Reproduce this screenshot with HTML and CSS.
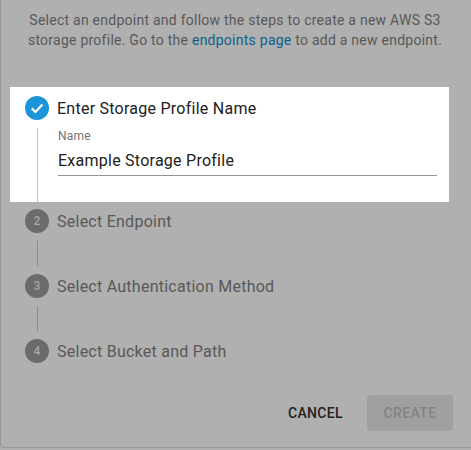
FILE: index.html
```html
<!DOCTYPE html>
<html lang="en">
<head>
  <meta charset="UTF-8">
  <title>Create Storage Profile</title>
  <link rel="stylesheet" href="styles.css">
</head>
<body>
  <div class="dialogo">
    <p class="intro">Select an endpoint and follow the steps to create a new AWS S3 storage profile. Go to the <a href="#">endpoints page</a> to add a new endpoint.</p>

    <div class="pasos">
      <div class="paso activo">
        <div class="paso-titulo">
          <span class="icono completo">
            <svg viewBox="0 0 24 24" width="24" height="24"><path d="M6.8 12.4l3.6 3.6 7-7.4" fill="none" stroke="#fff" stroke-width="2.2"/></svg>
          </span>
          <span class="paso-texto">Enter Storage Profile Name</span>
        </div>
        <div class="paso-contenido">
          <label class="campo">
            <span class="campo-label">Name</span>
            <input type="text" value="Example Storage Profile" readonly>
          </label>
        </div>
      </div>

      <div class="paso">
        <div class="paso-titulo"><span class="icono">2</span><span class="paso-texto">Select Endpoint</span></div>
        <div class="conector"></div>
      </div>
      <div class="paso">
        <div class="paso-titulo"><span class="icono">3</span><span class="paso-texto">Select Authentication Method</span></div>
        <div class="conector"></div>
      </div>
      <div class="paso">
        <div class="paso-titulo"><span class="icono">4</span><span class="paso-texto">Select Bucket and Path</span></div>
      </div>
    </div>

    <div class="acciones">
      <button class="cancelar">CANCEL</button>
      <button class="crear" disabled>CREATE</button>
    </div>
  </div>
</body>
</html>
```

FILE: styles.css
```css
* {
  box-sizing: border-box;
}

body {
  margin: 0;
  height: 450px;
  overflow: hidden;
  background-color: #b0b0b0;
  font-family: 'Roboto', sans-serif;
  letter-spacing: 0.25px;
}

.dialogo {
  height: 448px;
  border-left: 1px solid #999;
  border-bottom: 1px solid #999;
  border-bottom-left-radius: 3px;
  padding-top: 10px;
}

.intro {
  margin: 0 0 37px;
  padding: 0 22px 0 20px;
  text-align: center;
  font-size: 14px;
  line-height: 20px;
  color: #585858;
}

.intro a {
  color: #0e5f8c;
  text-decoration: none;
}

.pasos {
  margin-left: 9px;
  width: 439px;
}

.paso {
  padding: 0 12px 0 15px;
  color: #585858;
  font-size: 16px;
}

.paso.activo {
  height: 115px;
  padding-top: 9px;
  margin-bottom: 7px;
  background-color: #fff;
  color: #212121;
}

.paso-titulo {
  display: flex;
  align-items: center;
  gap: 8px;
  height: 24px;
}

.paso-texto {
  padding-top: 2px;
  line-height: 24px;
}

.icono {
  display: flex;
  align-items: center;
  justify-content: center;
  flex-shrink: 0;
  width: 24px;
  height: 24px;
  border-radius: 50%;
  background-color: #6b6b6b;
  color: #a8a8a8;
  font-size: 12px;
  font-weight: 500;
}

.icono.completo {
  background-color: #1b95d9;
}

.paso-contenido {
  margin: 8px 0 0 12px;
  height: 74px;
  border-left: 1px solid #bdbdbd;
  padding-left: 20px;
}

.conector {
  margin: 8px 0 8px 12px;
  height: 25px;
  border-left: 1px solid #8a8a8a;
}

.campo {
  display: block;
}

.campo-label {
  display: block;
  font-size: 12px;
  line-height: 16px;
  color: #757575;
}

.campo input {
  display: block;
  width: 100%;
  height: 32px;
  border: none;
  border-bottom: 1px solid #949494;
  padding: 2px 0 0;
  outline: none;
  font-family: 'Roboto', sans-serif;
  font-size: 16px;
  letter-spacing: 0.25px;
  color: #212121;
}

.acciones {
  display: flex;
  justify-content: flex-end;
  align-items: center;
  gap: 8px;
  margin-top: 32px;
  padding-right: 18px;
}

button {
  height: 36px;
  border: none;
  border-radius: 3px;
  padding: 0 16px;
  font-family: 'Roboto', sans-serif;
  font-size: 14px;
  font-weight: 500;
  letter-spacing: 0.35px;
}

.cancelar {
  background-color: transparent;
  color: #212121;
}

.crear {
  width: 86px;
  padding: 0;
  background-color: #a0a0a0;
  color: #838383;
}
```
